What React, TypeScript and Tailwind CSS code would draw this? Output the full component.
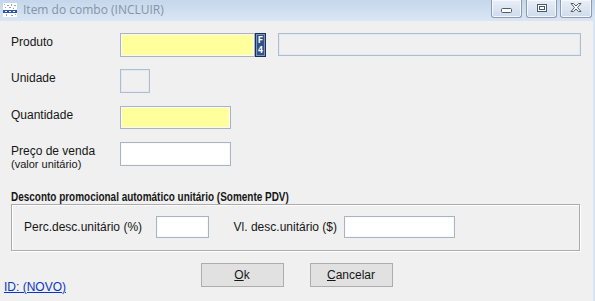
import React from "react";

const AppIcon = () => (
  <svg width="14" height="14" viewBox="0 0 14 14" className="shrink-0">
    <rect x="0" y="0" width="14" height="14" fill="#ffffff" />
    <g fill="#9aa3ad">
      <rect x="1" y="1" width="1" height="1" />
      <rect x="4" y="2" width="2" height="1" />
      <rect x="8" y="1" width="1" height="2" />
      <rect x="11" y="2" width="2" height="1" />
      <rect x="2" y="4" width="1" height="1" />
      <rect x="6" y="4" width="2" height="1" />
      <rect x="10" y="5" width="1" height="1" />
      <rect x="3" y="11" width="1" height="2" />
      <rect x="8" y="12" width="2" height="1" />
      <rect x="12" y="11" width="1" height="1" />
    </g>
    <rect x="0" y="7" width="14" height="3" fill="#2c55a8" />
    <g fill="#ffffff">
      <rect x="2" y="8" width="2" height="1" />
      <rect x="6" y="8" width="2" height="1" />
      <rect x="10" y="8" width="2" height="1" />
    </g>
  </svg>
);

const CaptionButton = ({ kind, w }: { kind: "min" | "max" | "close"; w: string }) => (
  <div
    className={`${w} h-[18px] flex items-center justify-center rounded-b-[3px] border border-t-0 border-[#8a9bb4] bg-gradient-to-b from-[#e9eff7] to-[#cfdbea] shadow-[inset_0_0_0_1px_#f4f7fb]`}
  >
    {kind === "min" && (
      <svg width="11" height="6" viewBox="0 0 11 6" className="mt-[5px]">
        <rect x="0.5" y="0.5" width="10" height="4" rx="1" fill="#fff" stroke="#4c5b70" />
      </svg>
    )}
    {kind === "max" && (
      <svg width="10" height="8" viewBox="0 0 10 8" className="-mt-[2px]">
        <rect x="0.5" y="0.5" width="9" height="7" fill="#fff" stroke="#4c5b70" />
        <rect x="2.5" y="2.5" width="5" height="3" fill="none" stroke="#4c5b70" />
      </svg>
    )}
    {kind === "close" && (
      <svg width="12" height="9" viewBox="0 0 12 9" className="-mt-[2px]">
        <path
          d="M1 0.5 L3.5 0.5 L6 3 L8.5 0.5 L11 0.5 L7.5 4.5 L11 8.5 L8.5 8.5 L6 6 L3.5 8.5 L1 8.5 L4.5 4.5 Z"
          fill="#fff"
          stroke="#4c5b70"
          strokeWidth="1"
          strokeLinejoin="round"
        />
      </svg>
    )}
  </div>
);

const TitleBar = () => (
  <div className="h-[21px] shrink-0 flex items-start bg-gradient-to-b from-[#c5d7ec] to-[#dae6f4]">
    <div className="pl-[3px] pt-[3px]">
      <AppIcon />
    </div>
    <div className="pl-[6px] pt-[2px] font-['Open_Sans',sans-serif] text-[12px] leading-[16px] text-[#8494a8]">
      Item do combo (INCLUIR)
    </div>
    <div className="ml-auto flex pr-[3px]">
      <CaptionButton kind="min" w="w-[31px]" />
      <div className="w-[4px]" />
      <CaptionButton kind="max" w="w-[31px]" />
      <div className="w-[3px]" />
      <CaptionButton kind="close" w="w-[32px]" />
    </div>
  </div>
);

const textBox = "border border-[#abb3be] shadow-[inset_0_0_0_1px_#f7f9fb]";
const disabledBox = "border border-[#aebdd0] bg-[#f0f0f0] shadow-[inset_0_0_0_1px_#e2e9f2]";

export default function App() {
  return (
    <div className="w-[595px] h-[301px] overflow-hidden flex flex-col bg-[#f0f0f0] font-['Liberation_Sans',Arial,sans-serif] text-[12px] leading-[14px] text-[#161616]">
      <TitleBar />
      <div className="flex-1 flex flex-col border-r-2 border-[#d8e4f2] pt-[12px]">
        <div className="flex pl-[11px]">
          <div className="w-[109px] pt-[2px]">Produto</div>
          <div className={`w-[135px] h-[24px] bg-[#ffff9c] ${textBox}`} />
          <div className="w-[11px] h-[24px] flex flex-col items-center justify-center bg-[#2f5288] border border-[#16305b] shadow-[inset_0_0_0_1px_#7d93b8] font-['DejaVu_Sans_Mono',monospace] font-bold text-[9px] leading-[10px] text-white">
            <span>F</span>
            <span>4</span>
          </div>
          <div className={`ml-[12px] w-[303px] h-[23px] ${disabledBox}`} />
        </div>

        <div className="flex pl-[11px] mt-[12px]">
          <div className="w-[109px] pt-[2px]">Unidade</div>
          <div className={`w-[30px] h-[24px] ${disabledBox}`} />
        </div>

        <div className="flex pl-[11px] mt-[13px]">
          <div className="w-[109px] pt-[2px]">Quantidade</div>
          <div className={`w-[111px] h-[23px] bg-[#ffff9c] ${textBox}`} />
        </div>

        <div className="flex h-[24px] pl-[11px] mt-[13px]">
          <div className="w-[109px] pt-[2px]">
            <div>Preço de venda</div>
            <div className="text-[11px] leading-[13px]">(valor unitário)</div>
          </div>
          <div className={`w-[111px] h-[24px] bg-white ${textBox}`} />
        </div>

        <div className="pl-[11px] mt-[25px]">
          <div className="h-[13px] leading-[13px] font-bold whitespace-nowrap origin-left scale-x-[0.83]">
            Desconto promocional automático unitário (Somente PDV)
          </div>
          <div className="w-[569px] h-[47px] flex items-center pl-[12px] pb-[1px] border border-[#acacac] shadow-[inset_1px_1px_0_#ffffff,1px_1px_0_#ffffff]">
            <div className="w-[132px]">Perc.desc.unitário (%)</div>
            <div className={`w-[53px] h-[22px] bg-white ${textBox}`} />
            <div className="w-[135px] text-right pr-[7px]">Vl. desc.unitário ($)</div>
            <div className={`w-[111px] h-[22px] bg-white ${textBox}`} />
          </div>
        </div>

        <div className="grid grid-cols-[1fr_auto_1fr] mt-[12px]">
          <div className="pl-[4px] pt-[17px]">
            <a href="#" className="text-[#0a36c8] underline">
              ID: (NOVO)
            </a>
          </div>
          <div className="flex gap-[26px]">
            <button className="w-[83px] h-[24px] bg-[#e1e1e1] border border-[#adadad]">
              <span className="underline">O</span>k
            </button>
            <button className="w-[83px] h-[24px] bg-[#e1e1e1] border border-[#adadad]">
              <span className="underline">C</span>ancelar
            </button>
          </div>
          <div />
        </div>
      </div>
    </div>
  );
}
